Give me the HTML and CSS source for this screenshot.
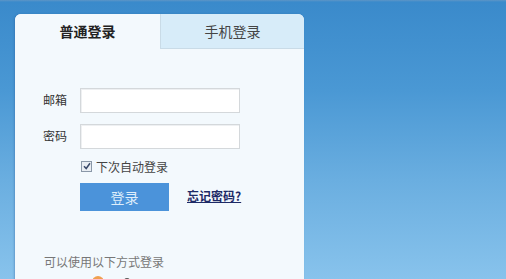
FILE: index.html
```html
<!DOCTYPE html>
<html lang="zh">
<head>
<meta charset="utf-8">
<link rel="stylesheet" href="styles.css">
</head>
<body>
<div class="page">
  <div class="panel">
    <div class="tabs">
      <div class="tab active">普通登录</div>
      <div class="tab">手机登录</div>
    </div>
    <div class="form">
      <div class="row">
        <span class="label">邮箱</span>
        <span class="input"></span>
      </div>
      <div class="row">
        <span class="label">密码</span>
        <span class="input"></span>
      </div>
      <div class="remember">
        <span class="check"><svg width="8" height="8" viewBox="0 0 8 8"><path d="M1 4.2 L3.2 6.5 L7 1.2" fill="none" stroke="#3a4a6a" stroke-width="1.5"/></svg></span>
        <span>下次自动登录</span>
      </div>
      <div class="actions">
        <span class="btn">登录</span>
        <a class="forgot">忘记密码?</a>
      </div>
      <div class="other">可以使用以下方式登录</div>
      <div class="icons">
        <span class="ico ico1"></span>
        <span class="ico ico2"></span>
      </div>
    </div>
  </div>
</div>
</body>
</html>
```
FILE: styles.css
```css
html, body {
  margin: 0;
  padding: 0;
}
body {
  width: 506px;
  height: 279px;
  overflow: hidden;
  font-family: "Noto Sans CJK SC", "Liberation Sans", sans-serif;
}
.page {
  width: 506px;
  height: 279px;
  box-sizing: border-box;
  padding: 14px 0 0 15px;
  background: linear-gradient(to bottom, #5d95c6 0px, #3a8acb 2px, #4a98d4 90px, #6aaee0 180px, #88c3ec 279px);
  overflow: hidden;
}
.panel {
  width: 289px;
  height: 280px;
  background: #f3f9fd;
  border-radius: 6px 6px 0 0;
  overflow: hidden;
  box-shadow: -1px 0 2px rgba(40,90,150,0.35);
}
.tabs {
  display: flex;
  height: 35px;
}
.tab {
  width: 144px;
  display: flex;
  align-items: center;
  justify-content: center;
  font-size: 14px;
  color: #444;
  background: #d7ecf9;
  border-bottom: 1px solid #c9dbe7;
  border-left: 1px solid #c9dbe7;
  box-sizing: border-box;
  padding-bottom: 1px;
}
.tab.active {
  width: 145px;
  background: #f3f9fd;
  border: none;
  color: #222;
  font-weight: bold;
}
.form {
  padding: 39px 0 0 28px;
}
.row {
  display: flex;
  align-items: center;
  height: 25px;
  margin-bottom: 11px;
}
.label {
  width: 37px;
  font-size: 12px;
  color: #333;
  margin-top: -2px;
}
.input {
  width: 158px;
  height: 23px;
  background: #fff;
  border: 1px solid #d4d8db;
  box-shadow: inset 1px 1px 0 #eef0f2;
}
.remember {
  display: flex;
  align-items: center;
  margin: -2px 0 0 38px;
  font-size: 12px;
  color: #444;
  height: 16px;
}
.check {
  width: 9px;
  height: 9px;
  border: 1px solid #8a98a8;
  background: #e9eef3;
  display: flex;
  align-items: center;
  justify-content: center;
  margin-right: 4px;
}
.actions {
  display: flex;
  align-items: center;
  margin: 9px 0 0 37px;
}
.btn {
  width: 89px;
  height: 28px;
  background: #4b93da;
  color: #dfeefb;
  font-size: 14px;
  display: flex;
  align-items: center;
  justify-content: center;
}
.forgot {
  margin-left: 18px;
  font-size: 12px;
  color: #1d2a66;
  font-weight: bold;
  text-decoration: underline;
  margin-top: -3px;
}
.other {
  margin: 42px 0 0 1px;
  font-size: 12px;
  color: #777;
}
.icons {
  display: flex;
  margin: 6px 0 0 49px;
  gap: 20px;
}
.ico {
  width: 12px;
  height: 12px;
  border-radius: 50%;
}
.ico1 { background: #f0a050; }
.ico2 { background: #555; width: 6px; height: 6px; margin-top: 2px; }
```
